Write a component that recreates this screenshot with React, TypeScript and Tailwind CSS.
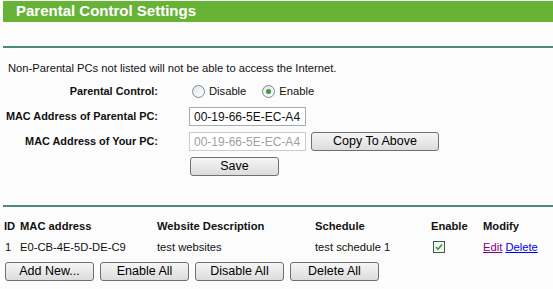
import { ReactNode } from 'react';

function Btn({ children, w }: { children: ReactNode; w: string }) {
  return (
    <button
      className={`${w} h-[19px] rounded-[3px] border border-[#707070] bg-gradient-to-b from-[#f6f6f6] to-[#dcdcdc] text-[12.5px] leading-none text-black`}
    >
      {children}
    </button>
  );
}

function Radio({ checked }: { checked?: boolean }) {
  return (
    <span className="flex h-[13px] w-[13px] items-center justify-center rounded-full border border-[#7a8a99] bg-gradient-to-br from-[#e4e4e4] to-white">
      {checked && <span className="h-[5px] w-[5px] rounded-full bg-[#3c9a3c]" />}
    </span>
  );
}

function Row({ label, children }: { label: string; children: ReactNode }) {
  return (
    <div className="flex h-[19px] items-center">
      <div className="flex w-[158px] justify-end whitespace-nowrap text-[10.9px] font-bold">{label}</div>
      <div className="ml-[31px] flex items-center gap-[5px]">{children}</div>
    </div>
  );
}

export default function App() {
  return (
    <div
      className="h-[289px] w-[553px] overflow-hidden bg-[#fcfcfc] pt-[1px] text-[11.2px] text-[#111]"
      style={{ fontFamily: '"Liberation Sans", Arial, sans-serif' }}
    >
      {/* Title bar */}
      <div className="ml-[3px] flex h-[21px] items-center bg-[#67b335] pl-[13px] text-[15px] font-bold text-white">
        Parental Control Settings
      </div>
      <div className="ml-[3px] mt-[24px] h-[2px] bg-[#4b8a78]" />

      <div className="mt-[13px] h-[14px] pl-[8px] leading-[14px]">
        Non-Parental PCs not listed will not be able to access the Internet.
      </div>

      {/* Form */}
      <div className="mt-[7px] flex flex-col gap-[6px]">
        <Row label="Parental Control:">
          <span className="ml-[3px] flex items-center gap-[4px]">
            <Radio />
            <span>Disable</span>
          </span>
          <span className="ml-[11px] flex items-center gap-[4px]">
            <Radio checked />
            <span>Enable</span>
          </span>
        </Row>
        <Row label="MAC Address of Parental PC:">
          <div className="flex h-[19px] w-[117px] items-center border border-[#a5acb5] bg-white pl-[4px] text-[12px]">
            00-19-66-5E-EC-A4
          </div>
        </Row>
        <Row label="MAC Address of Your PC:">
          <div className="flex h-[19px] w-[117px] items-center border border-[#c9cdd2] bg-white pl-[4px] text-[12px] text-[#a0a0a0]">
            00-19-66-5E-EC-A4
          </div>
          <Btn w="w-[128px]">Copy To Above</Btn>
        </Row>
        <Row label="">
          <Btn w="ml-[1px] w-[89px]">Save</Btn>
        </Row>
      </div>

      <div className="ml-[3px] mt-[29px] h-[2px] bg-[#4b8a78]" />

      {/* Table */}
      <table className="mt-[9px] w-[553px] table-fixed border-separate border-spacing-0">
        <colgroup>
          <col className="w-[19px]" />
          <col className="w-[138px]" />
          <col className="w-[158px]" />
          <col className="w-[116px]" />
          <col className="w-[52px]" />
          <col />
        </colgroup>
        <thead>
          <tr className="h-[21px] text-left font-bold">
            <th className="pl-[4px]">ID</th>
            <th className="pl-[1px]">MAC address</th>
            <th>Website Description</th>
            <th>Schedule</th>
            <th>Enable</th>
            <th>Modify</th>
          </tr>
        </thead>
        <tbody>
          <tr className="h-[20px]">
            <td className="pl-[5px]">1</td>
            <td className="pl-[1px]">E0-CB-4E-5D-DE-C9</td>
            <td>test websites</td>
            <td>test schedule 1</td>
            <td>
              <svg width="12" height="12" viewBox="0 0 12 12" className="ml-[2px]">
                <rect x="0.5" y="0.5" width="11" height="11" fill="#f4f6f4" stroke="#3d5a4a" />
                <path d="M3 6 L5 8.2 L9 3.5" fill="none" stroke="#2fa53a" strokeWidth="1.7" />
              </svg>
            </td>
            <td>
              <span className="text-[#800080] underline">Edit</span>{' '}
              <span className="text-[#0000ee] underline">Delete</span>
            </td>
          </tr>
        </tbody>
      </table>

      <div className="ml-[5px] mt-[5px] flex gap-[6px]">
        <Btn w="w-[89px]">Add New...</Btn>
        <Btn w="w-[89px]">Enable All</Btn>
        <Btn w="w-[89px]">Disable All</Btn>
        <Btn w="w-[89px]">Delete All</Btn>
      </div>
    </div>
  );
}
